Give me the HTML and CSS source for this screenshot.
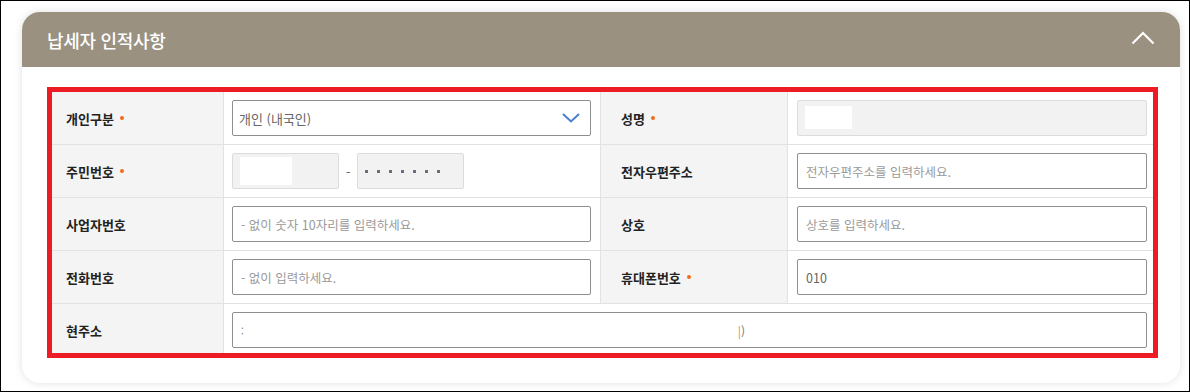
FILE: index.html
```html
<!DOCTYPE html>
<html lang="ko">
<head>
  <meta charset="UTF-8" />
  <meta name="viewport" content="width=device-width, initial-scale=1.0" />
  <title>납세자 인적사항</title>
  <link rel="stylesheet" href="styles.css">
</head>
<body>
  <div class="frame">
    <!-- PANEL -->
    <section class="panel">
      <div class="panel-head">
        <h2>납세자 인적사항</h2>
        <button class="fold-btn" aria-label="접기">
          <svg width="24" height="14" viewBox="0 0 24 14"><path d="M1.5 12.5 L12 2 L22.5 12.5" fill="none" stroke="#fff" stroke-width="2.2"/></svg>
        </button>
      </div>

      <div class="panel-body">
        <div class="form-box">
          <div class="form-grid">
            <!-- row 1 -->
            <div class="cell label first"><span class="req">개인구분</span></div>
            <div class="cell field">
              <div class="select">
                <span>개인 (내국인)</span>
                <svg width="18" height="10" viewBox="0 0 18 10"><path d="M1 1 L9 8.5 L17 1" fill="none" stroke="#4a7fd4" stroke-width="2"/></svg>
              </div>
            </div>
            <div class="cell label"><span class="req">성명</span></div>
            <div class="cell field last">
              <div class="input readonly"><span class="mask name-mask"></span></div>
            </div>

            <!-- row 2 -->
            <div class="cell label first"><span class="req">주민번호</span></div>
            <div class="cell field">
              <div class="jumin">
                <div class="input readonly short"><span class="mask jumin-mask"></span></div>
                <span class="dash">-</span>
                <div class="input readonly short dots">
                  <i></i><i></i><i></i><i></i><i></i><i></i><i></i>
                </div>
              </div>
            </div>
            <div class="cell label">전자우편주소</div>
            <div class="cell field last">
              <input class="input" type="text" placeholder="전자우편주소를 입력하세요.">
            </div>

            <!-- row 3 -->
            <div class="cell label first">사업자번호</div>
            <div class="cell field">
              <input class="input" type="text" placeholder="- 없이 숫자 10자리를 입력하세요.">
            </div>
            <div class="cell label">상호</div>
            <div class="cell field last">
              <input class="input" type="text" placeholder="상호를 입력하세요.">
            </div>

            <!-- row 4 -->
            <div class="cell label first">전화번호</div>
            <div class="cell field">
              <input class="input" type="text" placeholder="- 없이 입력하세요.">
            </div>
            <div class="cell label"><span class="req">휴대폰번호</span></div>
            <div class="cell field last">
              <input class="input" type="text" value="010">
            </div>

            <!-- row 5 -->
            <div class="cell label first">현주소</div>
            <div class="cell field wide last">
              <div class="input addr">
                <span class="addr-start">:</span>
                <span class="addr-end"><b>|</b>)</span>
              </div>
            </div>
          </div>
        </div>
      </div>
    </section>
  </div>
</body>
</html>
```

FILE: styles.css
```css
* {margin: 0; padding: 0; box-sizing: border-box;}
body {
  font-family: "Noto Sans CJK KR", "Noto Sans", sans-serif;
  background: #fff;
  color: #222;
}

.frame {
  width: 1190px;
  height: 392px;
  border: 1px solid #000;
  padding: 11px 0 0 21px;
  overflow: hidden;
}

/* Panel */
.panel {
  width: 1158px;
  background: #fff;
  border-radius: 18px;
  box-shadow: 0 0 8px rgba(0,0,0,0.12);
  overflow: hidden;
}
.panel-head {
  height: 55px;
  background: #9a9181;
  display: flex; align-items: center; justify-content: space-between;
  padding: 0 25px 0 25px;
}
.panel-head h2 {font-size: 18px; font-weight: 500; color: #fff; letter-spacing: -0.3px;}
.fold-btn {background: none; border: none; display: flex; margin-top: -4px;}

.panel-body {padding: 20px 22px 25px 25px;}

/* Red outlined form */
.form-box {
  border: 5px solid #ed1c24;
  height: 271px;
  overflow: hidden;
}
.form-grid {
  display: grid;
  grid-template-columns: 172px 377px 187px 365px;
  grid-auto-rows: 53px;
}
.cell {
  display: flex; align-items: center;
  border-bottom: 1px solid #e2e2e2;
  border-right: 1px solid #e2e2e2;
  padding-top: 1px;
}
.cell.last {border-right: none;}
.label {
  background: #f4f4f4;
  font-size: 13px; font-weight: 700; color: #222;
  padding-left: 20px;
}
.label.first {padding-left: 14px;}
.req::after {
  content: ""; display: inline-block;
  width: 4px; height: 4px; border-radius: 50%;
  background: #f26a1b; margin-left: 6px; vertical-align: middle; position: relative; top: -2px;
}
.field {padding: 0 9px 0 8px;}
.field.last {padding: 0 6px 0 9px;}
.field.wide {grid-column: 2 / 5;}
.field.wide.last {padding-left: 8px;}

/* Inputs */
.input {
  width: 100%; height: 36px;
  border: 1px solid #8e8e8e; border-radius: 2px;
  padding: 0 8px;
  font-family: inherit; font-size: 12.5px; color: #666;
  background: #fff;
  display: flex; align-items: center;
}
.input::placeholder {color: #9a9a9a;}
input.input {display: block; outline: none;}
.input.readonly {background: #f2f2f2; border-color: #dcdcdc; padding: 0 7px;}
.mask {display: block; background: #fff;}
.name-mask {width: 47px; height: 23px; margin-top: -1px;}

.select {
  width: 100%; height: 36px;
  border: 1px solid #8e8e8e; border-radius: 2px;
  display: flex; align-items: center; justify-content: space-between;
  padding: 0 10px 0 6px;
  font-size: 13px; color: #666;
}

.jumin {display: flex; align-items: center; gap: 7px;}
.input.short {width: 107px;}
.jumin-mask {width: 52px; height: 28px;}
.dash {color: #666; font-size: 13px; margin-right: -1px;}
.dots {gap: 9px; padding-left: 12px;}
.dots i {display: block; width: 3px; height: 3px; background: #6a6d80;}

.addr {justify-content: flex-start;}
.addr-start {font-size: 10px; color: #888;}
.addr-end {margin-left: 494px; color: #777; font-size: 12px;}
.addr-end b {font-weight: 400; color: #e5806c;}
```
